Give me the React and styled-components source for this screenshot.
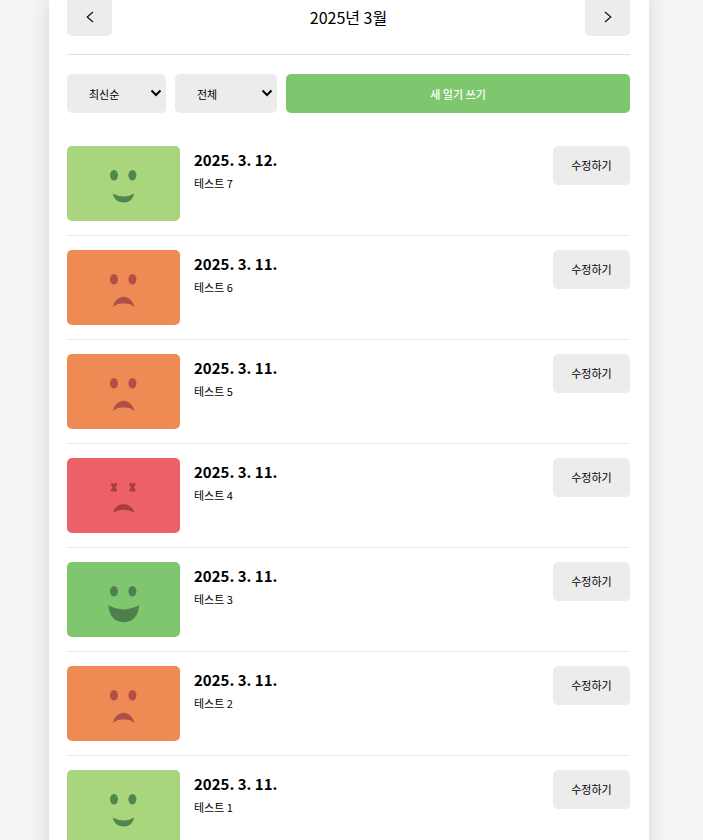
import React from 'react'
import styled, { createGlobalStyle } from 'styled-components'

const FONT = '"Noto Sans CJK KR", "Noto Sans", sans-serif'

// Colours per emotion
const MOODS = {
    great: { bg: '#7fc76f', ink: '#4f7f4d' },
    good: { bg: '#a9d67d', ink: '#4f884c' },
    sad: { bg: '#ee8a53', ink: '#b04f48' },
    terrible: { bg: '#ec6167', ink: '#a83d3e' },
}

const MOUTHS = {
    great: 'M41.3 43.3 Q56.5 51.5 72 43.3 Q71 60 56.5 60.2 Q43 60 41.3 43.3 Z',
    good: 'M45.7 47.5 Q56.5 53.5 67.3 47.5 Q65.5 56.5 56.5 56.6 Q47.5 56.5 45.7 47.5 Z',
    sad: 'M45.5 56.7 Q49 46.7 56.5 46.7 Q64 46.7 67.7 56.7 Q56.5 50 45.5 56.7 Z',
    terrible: 'M45.7 54.7 Q49 46.3 56.5 46.3 Q64 46.3 68 54.7 Q56.5 49 45.7 54.7 Z',
}

const GlobalStyle = createGlobalStyle`
    html, body {
        margin: 0;
        padding: 0;
        background-color: #f5f5f5;
    }
    body {
        font-family: ${FONT};
        color: #000000;
    }
`

const Page = styled.div`
    height: 100vh;
    overflow: hidden;
    padding-left: 49px;
`
const Card = styled.main`
    width: 600px;
    min-height: 100%;
    box-sizing: border-box;
    padding: 0 19px 0 18px;
    background-color: #ffffff;
    box-shadow: 0 0 20px rgba(100, 100, 100, 0.2);
`
const Header = styled.header`
    display: flex;
    align-items: center;
    justify-content: space-between;
    margin-top: -3px;
    padding-bottom: 18px;
    border-bottom: 1px solid #e2e2e2;
`
const Title = styled.h1`
    margin: 0;
    font-size: 16px;
    font-weight: 400;
`
const NavButton = styled.button`
    display: flex;
    align-items: center;
    justify-content: center;
    width: 45px;
    height: 39px;
    padding: 0;
    border: none;
    border-radius: 5px;
    background-color: #ececec;
`
const Chevron = styled.svg`
    display: block;
    width: 8px;
    height: 12px;
    fill: none;
    stroke: #10141c;
    stroke-width: 1.2;
`
const Controls = styled.div`
    display: flex;
    gap: 9px;
    margin-top: 19px;
    margin-bottom: 19px;
`
const SelectBox = styled.div`
    position: relative;
    width: ${(props) => props.$width}px;
    height: 39px;
`
const Select = styled.select`
    appearance: none;
    display: block;
    width: 100%;
    height: 100%;
    padding: 0 22px;
    border: none;
    border-radius: 5px;
    background-color: #ececec;
    color: #000000;
    font-family: ${FONT};
    font-size: 11px;
`
const SelectArrow = styled.svg`
    position: absolute;
    top: 15px;
    right: 4px;
    width: 12px;
    height: 8px;
    fill: none;
    stroke: #000000;
    stroke-width: 2;
    pointer-events: none;
`
const NewButton = styled.button`
    flex: 1;
    height: 39px;
    border: none;
    border-radius: 5px;
    background-color: #7fc76f;
    color: #ffffff;
    font-family: ${FONT};
    font-size: 11px;
    font-weight: 500;
`
const Row = styled.article`
    display: flex;
    gap: 14px;
    padding: 14px 0;
    border-bottom: 1px solid #ececec;
`
const Thumb = styled.svg`
    display: block;
    flex: none;
    width: 113px;
    height: 75px;
    border-radius: 5px;
    background-color: ${(props) => MOODS[props.$mood].bg};
    fill: ${(props) => MOODS[props.$mood].ink};
    stroke: ${(props) => MOODS[props.$mood].ink};
    stroke-width: 0;
`
const CrossStroke = styled.path`
    fill: none;
    stroke-width: 2.8;
`
const Info = styled.div`
    flex: 1;
    min-width: 0;
`
const DateText = styled.div`
    margin-top: 2px;
    font-size: 15px;
    line-height: 24px;
    font-weight: 700;
`
const Content = styled.div`
    margin-top: 3px;
    font-size: 11px;
    line-height: 16px;
`
const EditButton = styled.button`
    flex: none;
    align-self: flex-start;
    width: 77px;
    height: 38.5px;
    border: none;
    border-radius: 5px;
    background-color: #ececec;
    color: #000000;
    font-family: ${FONT};
    font-size: 11px;
`

const ENTRIES = [
    { id: 7, date: '2025. 3. 12.', mood: 'good', text: '테스트 7' },
    { id: 6, date: '2025. 3. 11.', mood: 'sad', text: '테스트 6' },
    { id: 5, date: '2025. 3. 11.', mood: 'sad', text: '테스트 5' },
    { id: 4, date: '2025. 3. 11.', mood: 'terrible', text: '테스트 4' },
    { id: 3, date: '2025. 3. 11.', mood: 'great', text: '테스트 3' },
    { id: 2, date: '2025. 3. 11.', mood: 'sad', text: '테스트 2' },
    { id: 1, date: '2025. 3. 11.', mood: 'good', text: '테스트 1' },
]

const CrossEye = ({ x }) => (
    <CrossStroke d={`M${x - 2.2} 25.3 L${x + 2.2} 33.3 M${x + 2.2} 25.3 L${x - 2.2} 33.3`} />
)

const Face = ({ mood }) => (
    <Thumb $mood={mood} viewBox="0 0 113 75">
        {mood === 'terrible' ? (
            <>
                <CrossEye x={47} />
                <CrossEye x={65.5} />
            </>
        ) : (
            <>
                <ellipse cx="47" cy="29.2" rx="4" ry="5.3" />
                <ellipse cx="65.4" cy="29.2" rx="4" ry="5.3" />
            </>
        )}
        <path d={MOUTHS[mood]} />
    </Thumb>
)

const Dropdown = ({ width, value, options }) => (
    <SelectBox $width={width}>
        <Select defaultValue={value}>
            {options.map((option) => (
                <option key={option.value} value={option.value}>
                    {option.label}
                </option>
            ))}
        </Select>
        <SelectArrow viewBox="0 0 12 8">
            <path d="M1.5 1.5 L6 6 L10.5 1.5" />
        </SelectArrow>
    </SelectBox>
)

const App = () => {
    return (
        <Page>
            <GlobalStyle />
            <Card>
                <Header>
                    <NavButton aria-label="이전 달">
                        <Chevron viewBox="0 0 8 12">
                            <path d="M7 1 L1.2 6 L7 11" />
                        </Chevron>
                    </NavButton>
                    <Title>2025년 3월</Title>
                    <NavButton aria-label="다음 달">
                        <Chevron viewBox="0 0 8 12">
                            <path d="M1 1 L6.8 6 L1 11" />
                        </Chevron>
                    </NavButton>
                </Header>
                <Controls>
                    <Dropdown
                        width={99}
                        value="latest"
                        options={[
                            { value: 'latest', label: '최신순' },
                            { value: 'oldest', label: '오래된 순' },
                        ]}
                    />
                    <Dropdown
                        width={102}
                        value="all"
                        options={[
                            { value: 'all', label: '전체' },
                            { value: 'good', label: '좋은 감정만' },
                        ]}
                    />
                    <NewButton>새 일기 쓰기</NewButton>
                </Controls>
                {ENTRIES.map((entry) => (
                    <Row key={entry.id}>
                        <Face mood={entry.mood} />
                        <Info>
                            <DateText>{entry.date}</DateText>
                            <Content>{entry.text}</Content>
                        </Info>
                        <EditButton>수정하기</EditButton>
                    </Row>
                ))}
            </Card>
        </Page>
    )
}

export default App
